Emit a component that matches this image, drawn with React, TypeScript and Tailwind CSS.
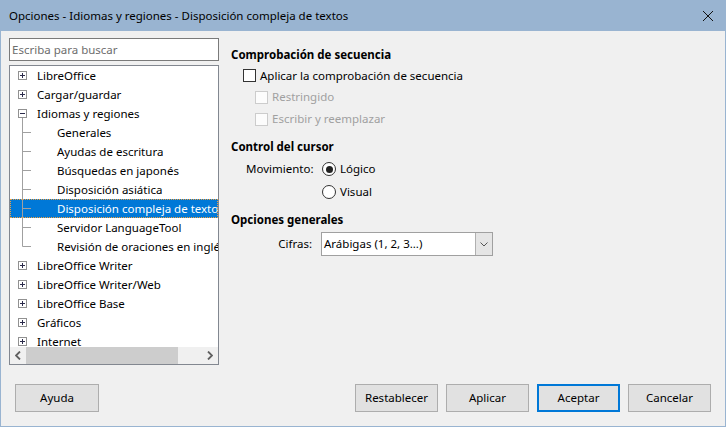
import { ReactNode } from "react";

const Expander = ({ open, line }: { open?: boolean; line?: boolean }) => (
  <svg width="9" height="19" viewBox="0 0 9 19" className="ml-[8px] shrink-0">
    <rect x="0.5" y="5.5" width="8" height="8" fill="#fff" stroke="#919191" />
    <line x1="2" y1="9.5" x2="7" y2="9.5" stroke="#2b2b4b" />
    {!open && <line x1="4.5" y1="7" x2="4.5" y2="12" stroke="#2b2b4b" />}
    {line && <line x1="4.5" y1="14" x2="4.5" y2="19" stroke="#a0a0a0" />}
  </svg>
);

const ChildLines = ({ last }: { last?: boolean }) => (
  <svg width="23" height="19" viewBox="0 0 23 19" className="ml-[8px] shrink-0">
    <line x1="4.5" y1="0" x2="4.5" y2={last ? 9.5 : 19} stroke="#a0a0a0" />
    <line x1="4.5" y1="9.5" x2="13" y2="9.5" stroke="#a0a0a0" />
  </svg>
);

const TopRow = ({ label, open }: { label: string; open?: boolean }) => (
  <div className="flex h-[19px] items-center">
    <Expander open={open} line={open} />
    <span className="ml-[10px]">{label}</span>
  </div>
);

const ChildRow = ({ label, last, selected }: { label: string; last?: boolean; selected?: boolean }) => (
  <div
    className={
      selected
        ? "flex h-[19px] items-center bg-[#0078d7] text-white outline-1 outline-dotted outline-[#f0a040] -outline-offset-1"
        : "flex h-[19px] items-center"
    }
  >
    <ChildLines last={last} />
    <span className="ml-[16px]">{label}</span>
  </div>
);

const CheckBox = ({ disabled, children }: { disabled?: boolean; children: ReactNode }) => (
  <div className="flex items-center">
    <div
      className={
        disabled
          ? "w-[13px] h-[13px] border border-[#cccccc] bg-[#fcfcfc]"
          : "w-[13px] h-[13px] border border-[#333333] bg-white"
      }
    />
    <span className={disabled ? "ml-[4px] text-[#a0a0a0]" : "ml-[4px]"}>{children}</span>
  </div>
);

const Radio = ({ checked, children }: { checked?: boolean; children: ReactNode }) => (
  <div className="flex items-center">
    <div className="w-[14px] h-[14px] rounded-full border border-[#333333] bg-white flex items-center justify-center">
      {checked && <div className="w-[7px] h-[7px] rounded-full bg-[#222222]" />}
    </div>
    <span className="ml-[4px]">{children}</span>
  </div>
);

const Button = ({ label, primary, wide }: { label: string; primary?: boolean; wide?: boolean }) => (
  <button
    className={
      (wide ? "w-[84px] " : "w-[83px] ") +
      (primary
        ? "h-[28px] bg-[#e1e1e1] border-2 border-[#0078d7] text-black"
        : "h-[28px] bg-[#e1e1e1] border border-[#adadad] text-black")
    }
  >
    {label}
  </button>
);

export default function App() {
  return (
    <div
      className="w-[726px] h-[427px] flex flex-col border border-[#99b4d1] bg-[#f0f0f0] text-[11.5px] text-black leading-none"
      style={{ fontFamily: '"Noto Sans", "Liberation Sans", sans-serif' }}
    >
      <div className="h-[30px] shrink-0 bg-[#99b4d1] flex items-center justify-between pl-[8px] pr-[12px]">
        <span>Opciones - Idiomas y regiones - Disposición compleja de textos</span>
        <svg width="10" height="10" viewBox="0 0 10 10">
          <line x1="0" y1="0" x2="10" y2="10" stroke="#111" strokeWidth="1" />
          <line x1="10" y1="0" x2="0" y2="10" stroke="#111" strokeWidth="1" />
        </svg>
      </div>

      <div className="flex-1 flex flex-col">
        <div className="flex-1 flex pt-[7px]">
          <div className="ml-[8px] w-[210px] flex flex-col">
            <div className="h-[23px] border border-[#7a7a7a] bg-white flex items-center pl-[2px] text-[#6d6d6d]">
              Escriba para buscar
            </div>
            <div className="mt-[4px] h-[300px] border border-[#828790] bg-white flex flex-col">
              <div className="flex-1 overflow-hidden whitespace-nowrap">
                <TopRow label="LibreOffice" />
                <TopRow label="Cargar/guardar" />
                <TopRow label="Idiomas y regiones" open />
                <ChildRow label="Generales" />
                <ChildRow label="Ayudas de escritura" />
                <ChildRow label="Búsquedas en japonés" />
                <ChildRow label="Disposición asiática" />
                <ChildRow label="Disposición compleja de textos" selected />
                <ChildRow label="Servidor LanguageTool" />
                <ChildRow label="Revisión de oraciones en inglés" last />
                <TopRow label="LibreOffice Writer" />
                <TopRow label="LibreOffice Writer/Web" />
                <TopRow label="LibreOffice Base" />
                <TopRow label="Gráficos" />
                <TopRow label="Internet" />
              </div>
              <div className="h-[17px] shrink-0 flex bg-[#f0f0f0]">
                <div className="w-[16px] flex items-center justify-center">
                  <svg width="6" height="9" viewBox="0 0 6 9">
                    <path d="M5 0.5 L1 4.5 L5 8.5" fill="none" stroke="#606060" strokeWidth="1.8" />
                  </svg>
                </div>
                <div className="w-[152px] bg-[#cdcdcd]" />
                <div className="flex-1" />
                <div className="w-[17px] flex items-center justify-center">
                  <svg width="6" height="9" viewBox="0 0 6 9">
                    <path d="M1 0.5 L5 4.5 L1 8.5" fill="none" stroke="#606060" strokeWidth="1.8" />
                  </svg>
                </div>
              </div>
            </div>
          </div>

          <div className="ml-[12px] flex flex-col pt-[7px]">
            <div className="h-[20px] flex items-center font-bold">Comprobación de secuencia</div>
            <div className="h-[21px] flex items-center ml-[12px]">
              <CheckBox>Aplicar la comprobación de secuencia</CheckBox>
            </div>
            <div className="h-[22px] flex items-center ml-[24px]">
              <CheckBox disabled>Restringido</CheckBox>
            </div>
            <div className="h-[22px] flex items-center ml-[24px]">
              <CheckBox disabled>Escribir y reemplazar</CheckBox>
            </div>

            <div className="mt-[7px] h-[20px] flex items-center font-bold">Control del cursor</div>
            <div className="h-[24px] flex items-center">
              <span className="ml-[15px] w-[66px] text-right">Movimiento:</span>
              <div className="ml-[10px]">
                <Radio checked>Lógico</Radio>
              </div>
            </div>
            <div className="h-[22px] flex items-center">
              <div className="ml-[91px]">
                <Radio>Visual</Radio>
              </div>
            </div>

            <div className="mt-[7px] h-[20px] flex items-center font-bold">Opciones generales</div>
            <div className="mt-[2px] h-[24px] flex items-center">
              <span className="ml-[15px] w-[66px] text-right">Cifras:</span>
              <div className="ml-[9px] w-[172px] h-[24px] border border-[#a0a0a0] bg-white flex">
                <div className="flex-1 flex items-center pl-[2px]">Arábigas (1, 2, 3...)</div>
                <div className="w-[17px] bg-[#e5e5e5] border-l border-[#b0b0b0] flex items-center justify-center">
                  <svg width="8" height="5" viewBox="0 0 8 5">
                    <path d="M0.5 0.5 L4 4 L7.5 0.5" fill="none" stroke="#555" strokeWidth="1" />
                  </svg>
                </div>
              </div>
            </div>
          </div>
        </div>

        <div className="flex items-center px-[14px] pb-[14px]">
          <Button label="Ayuda" wide />
          <div className="flex-1" />
          <div className="flex gap-[8px]">
            <Button label="Restablecer" />
            <Button label="Aplicar" />
            <Button label="Aceptar" primary />
            <Button label="Cancelar" />
          </div>
        </div>
      </div>
    </div>
  );
}
